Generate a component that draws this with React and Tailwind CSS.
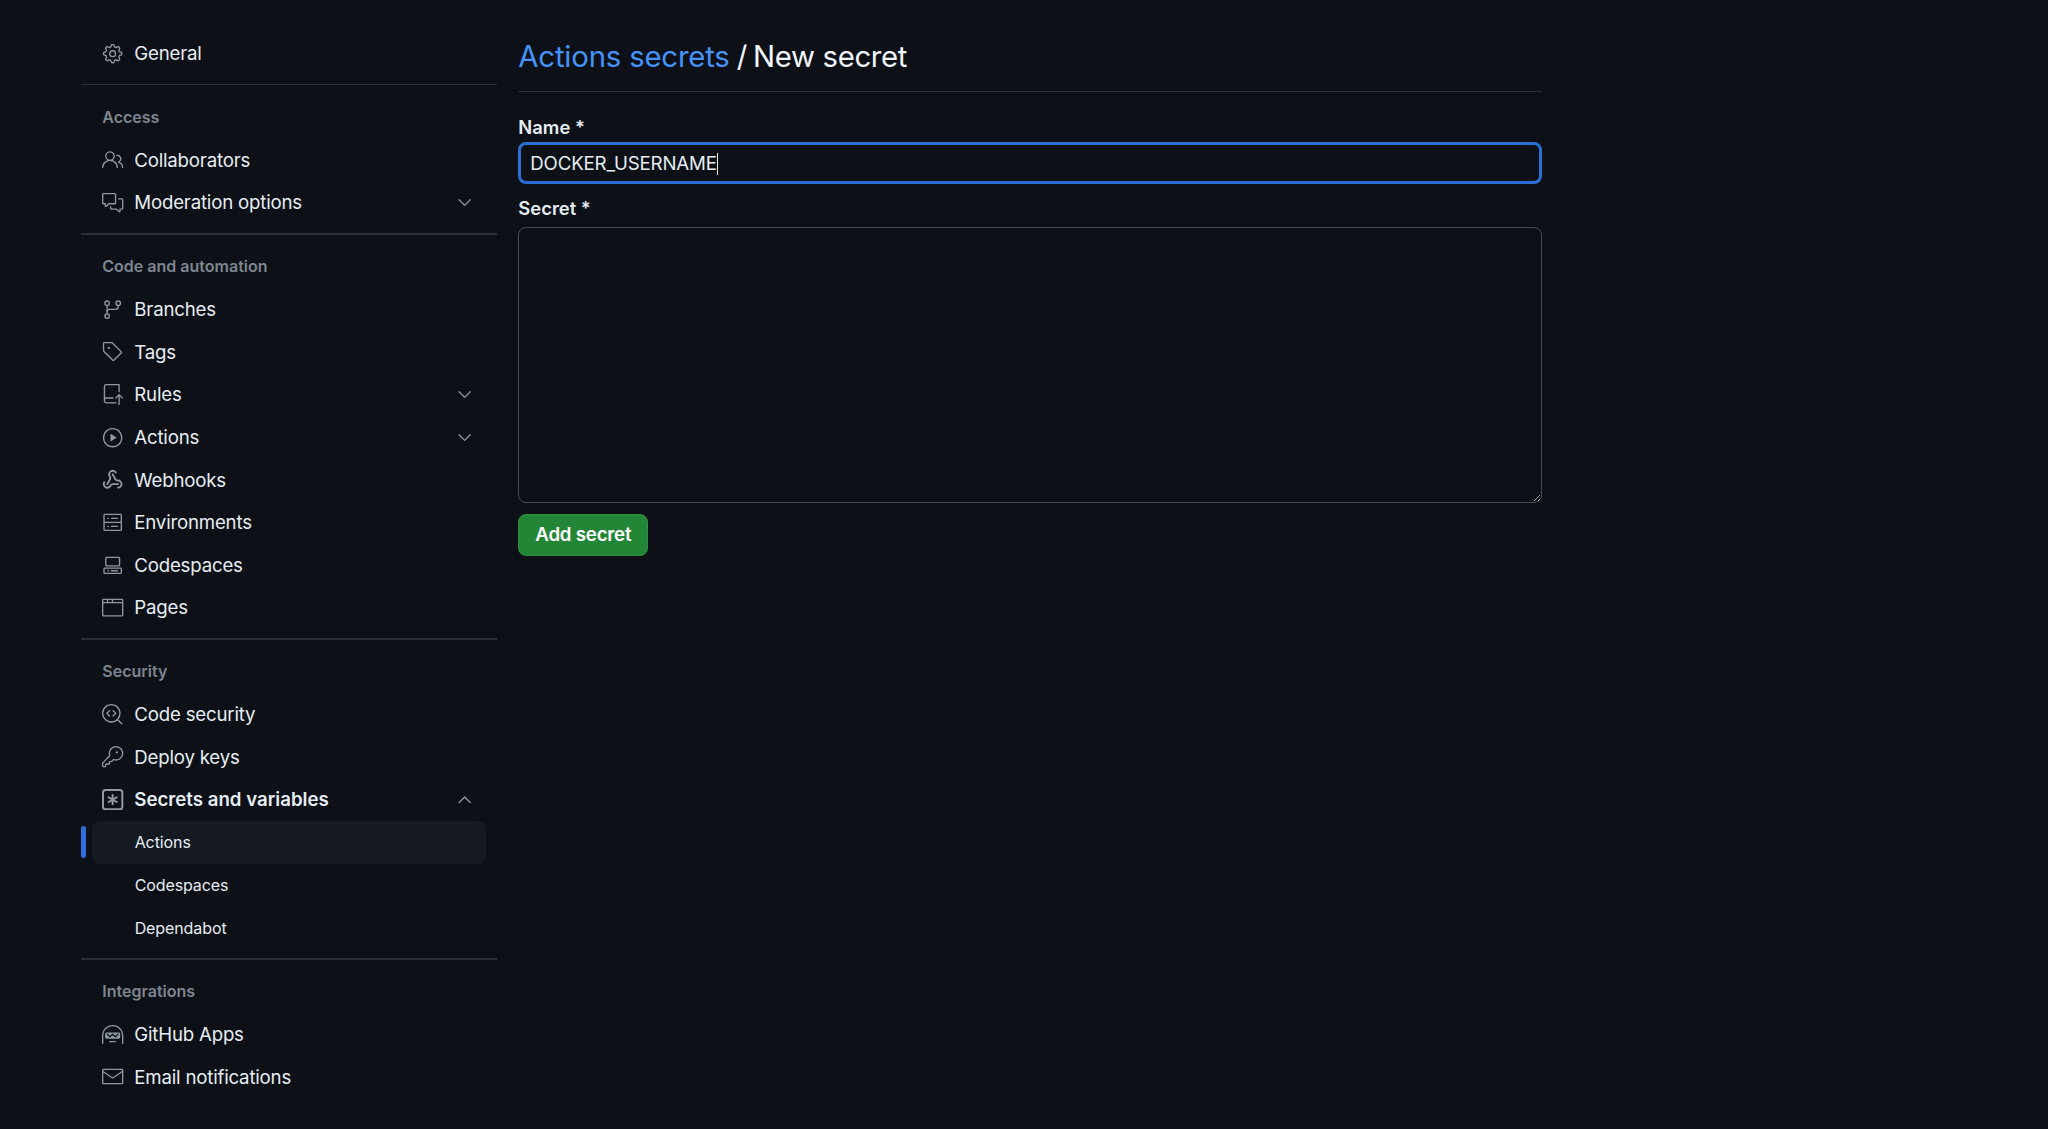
import React from "react";
import {
  GoGear, GoPeople, GoCommentDiscussion, GoChevronDown, GoChevronUp, GoGitBranch, GoTag, GoRepoPush,
  GoPlay, GoServer, GoCodespaces, GoBrowser, GoCodescan, GoKey, GoHubot, GoMail,
} from "react-icons/go";
import { Webhook } from "lucide-react";

function GoWebhook({ className }) {
  return <Webhook className={className} strokeWidth={2.1} />;
}

function GoKeyAsterisk({ className }) {
  return (
    <svg viewBox="0 0 16 16" className={className} fill="none" stroke="currentColor">
      <rect x="0.75" y="0.75" width="14.5" height="14.5" rx="2" strokeWidth="1.5" />
      <path d="M8 4.5v7M4.97 6.25l6.06 3.5M11.03 6.25l-6.06 3.5" strokeWidth="1.5" strokeLinecap="round" />
    </svg>
  );
}

function Item({ icon: Icon, label, chevron, bold }) {
  return (
    <div className="mx-[10.67px] flex h-[42.67px] items-center gap-[10.67px] rounded-[8px] px-[10.67px]">
      <Icon className="h-[21.33px] w-[21.33px] shrink-0 text-[#9198a1]" />
      <span className={`flex-1 pt-[1.33px] text-[18.67px] text-[#e6edf3] ${bold ? "font-semibold" : "font-normal tracking-[-0.2px]"}`}>{label}</span>
      {chevron === "down" && <GoChevronDown className="h-[21.33px] w-[21.33px] text-[#9198a1]" />}
      {chevron === "up" && <GoChevronUp className="h-[21.33px] w-[21.33px] text-[#9198a1]" />}
    </div>
  );
}

function SubItem({ label, active }) {
  return (
    <div className="relative">
      {active && <div className="absolute left-0 top-[5.33px] h-[32px] w-[5.33px] rounded-[4px] bg-[#2f6fdc]" />}
      <div className={`mx-[10.67px] flex h-[42.67px] items-center rounded-[8px] pl-[43px] text-[16px] tracking-[-0.1px] text-[#e6edf3] ${active ? "bg-[#141922]" : ""}`}>
        {label}
      </div>
    </div>
  );
}

function Divider() {
  return <div className="my-[9.33px] h-[1.33px] bg-[#2a2f36]" />;
}

function Heading({ children }) {
  return (
    <div className="mt-[20.67px] mb-[11.33px] flex h-[21.33px] items-center px-[21.33px] text-[16px] font-semibold text-[#7d8590]">
      {children}
    </div>
  );
}

export default function App() {
  return (
    <div
      className="flex min-h-[1129px] bg-[#0d1117] pl-[81px] text-[#e6edf3] [color-scheme:dark]"
      style={{ fontFamily: "Inter, 'Noto Sans', sans-serif" }}
    >
      <aside className="w-[416px] shrink-0 pt-[32px]">
        <Item icon={GoGear} label="General" />
        <Divider />
        <Heading>Access</Heading>
        <Item icon={GoPeople} label="Collaborators" />
        <Item icon={GoCommentDiscussion} label="Moderation options" chevron="down" />
        <Divider />
        <Heading>Code and automation</Heading>
        <Item icon={GoGitBranch} label="Branches" />
        <Item icon={GoTag} label="Tags" />
        <Item icon={GoRepoPush} label="Rules" chevron="down" />
        <Item icon={GoPlay} label="Actions" chevron="down" />
        <Item icon={GoWebhook} label="Webhooks" />
        <Item icon={GoServer} label="Environments" />
        <Item icon={GoCodespaces} label="Codespaces" />
        <Item icon={GoBrowser} label="Pages" />
        <Divider />
        <Heading>Security</Heading>
        <Item icon={GoCodescan} label="Code security" />
        <Item icon={GoKey} label="Deploy keys" />
        <Item icon={GoKeyAsterisk} label="Secrets and variables" chevron="up" bold />
        <SubItem label="Actions" active />
        <SubItem label="Codespaces" />
        <SubItem label="Dependabot" />
        <Divider />
        <Heading>Integrations</Heading>
        <Item icon={GoHubot} label="GitHub Apps" />
        <Item icon={GoMail} label="Email notifications" />
      </aside>

      <main className="ml-[21.33px] w-[1023.67px] shrink-0 pt-[32px]">
        <div className="flex h-[60px] items-center border-b-[1.33px] border-[#2a2f36] pb-[9px] text-[29.33px] font-normal tracking-[-0.36px] text-[#f0f6fc]">
          <span className="tracking-[-0.19px] text-[#4493f8]">Actions secrets</span>
          <span className="whitespace-pre tracking-[-1.2px]"> / </span>
          <span>New secret</span>
        </div>
        <div className="mt-[25.5px] flex h-[21px] items-center text-[18.4px] font-semibold">Name *</div>
        <div className="mt-[3px] flex h-[42px] items-center rounded-[8px] border-[3px] border-[#2a6fd3] pl-[9px] pt-[2px] text-[18.67px] tracking-[-0.17px]">
          <span>DOCKER_USERNAME</span>
          <span className="h-[22px] w-[1.33px] bg-[#e6edf3]" />
        </div>
        <div className="mt-[14.5px] flex h-[21px] items-center text-[18.4px] font-semibold">Secret *</div>
        <textarea
          aria-label="Secret"
          className="mt-[7.5px] block h-[276px] w-full resize-y rounded-[8px] border-[1.33px] border-[#454b54] bg-transparent outline-none"
        />
        <button className="mt-[11px] flex h-[42.67px] w-[130px] items-center justify-center rounded-[8px] border-[1.33px] border-[#2f9040] bg-[#238636] text-[18.67px] font-semibold tracking-[-0.2px] text-white">
          Add secret
        </button>
      </main>
    </div>
  );
}
